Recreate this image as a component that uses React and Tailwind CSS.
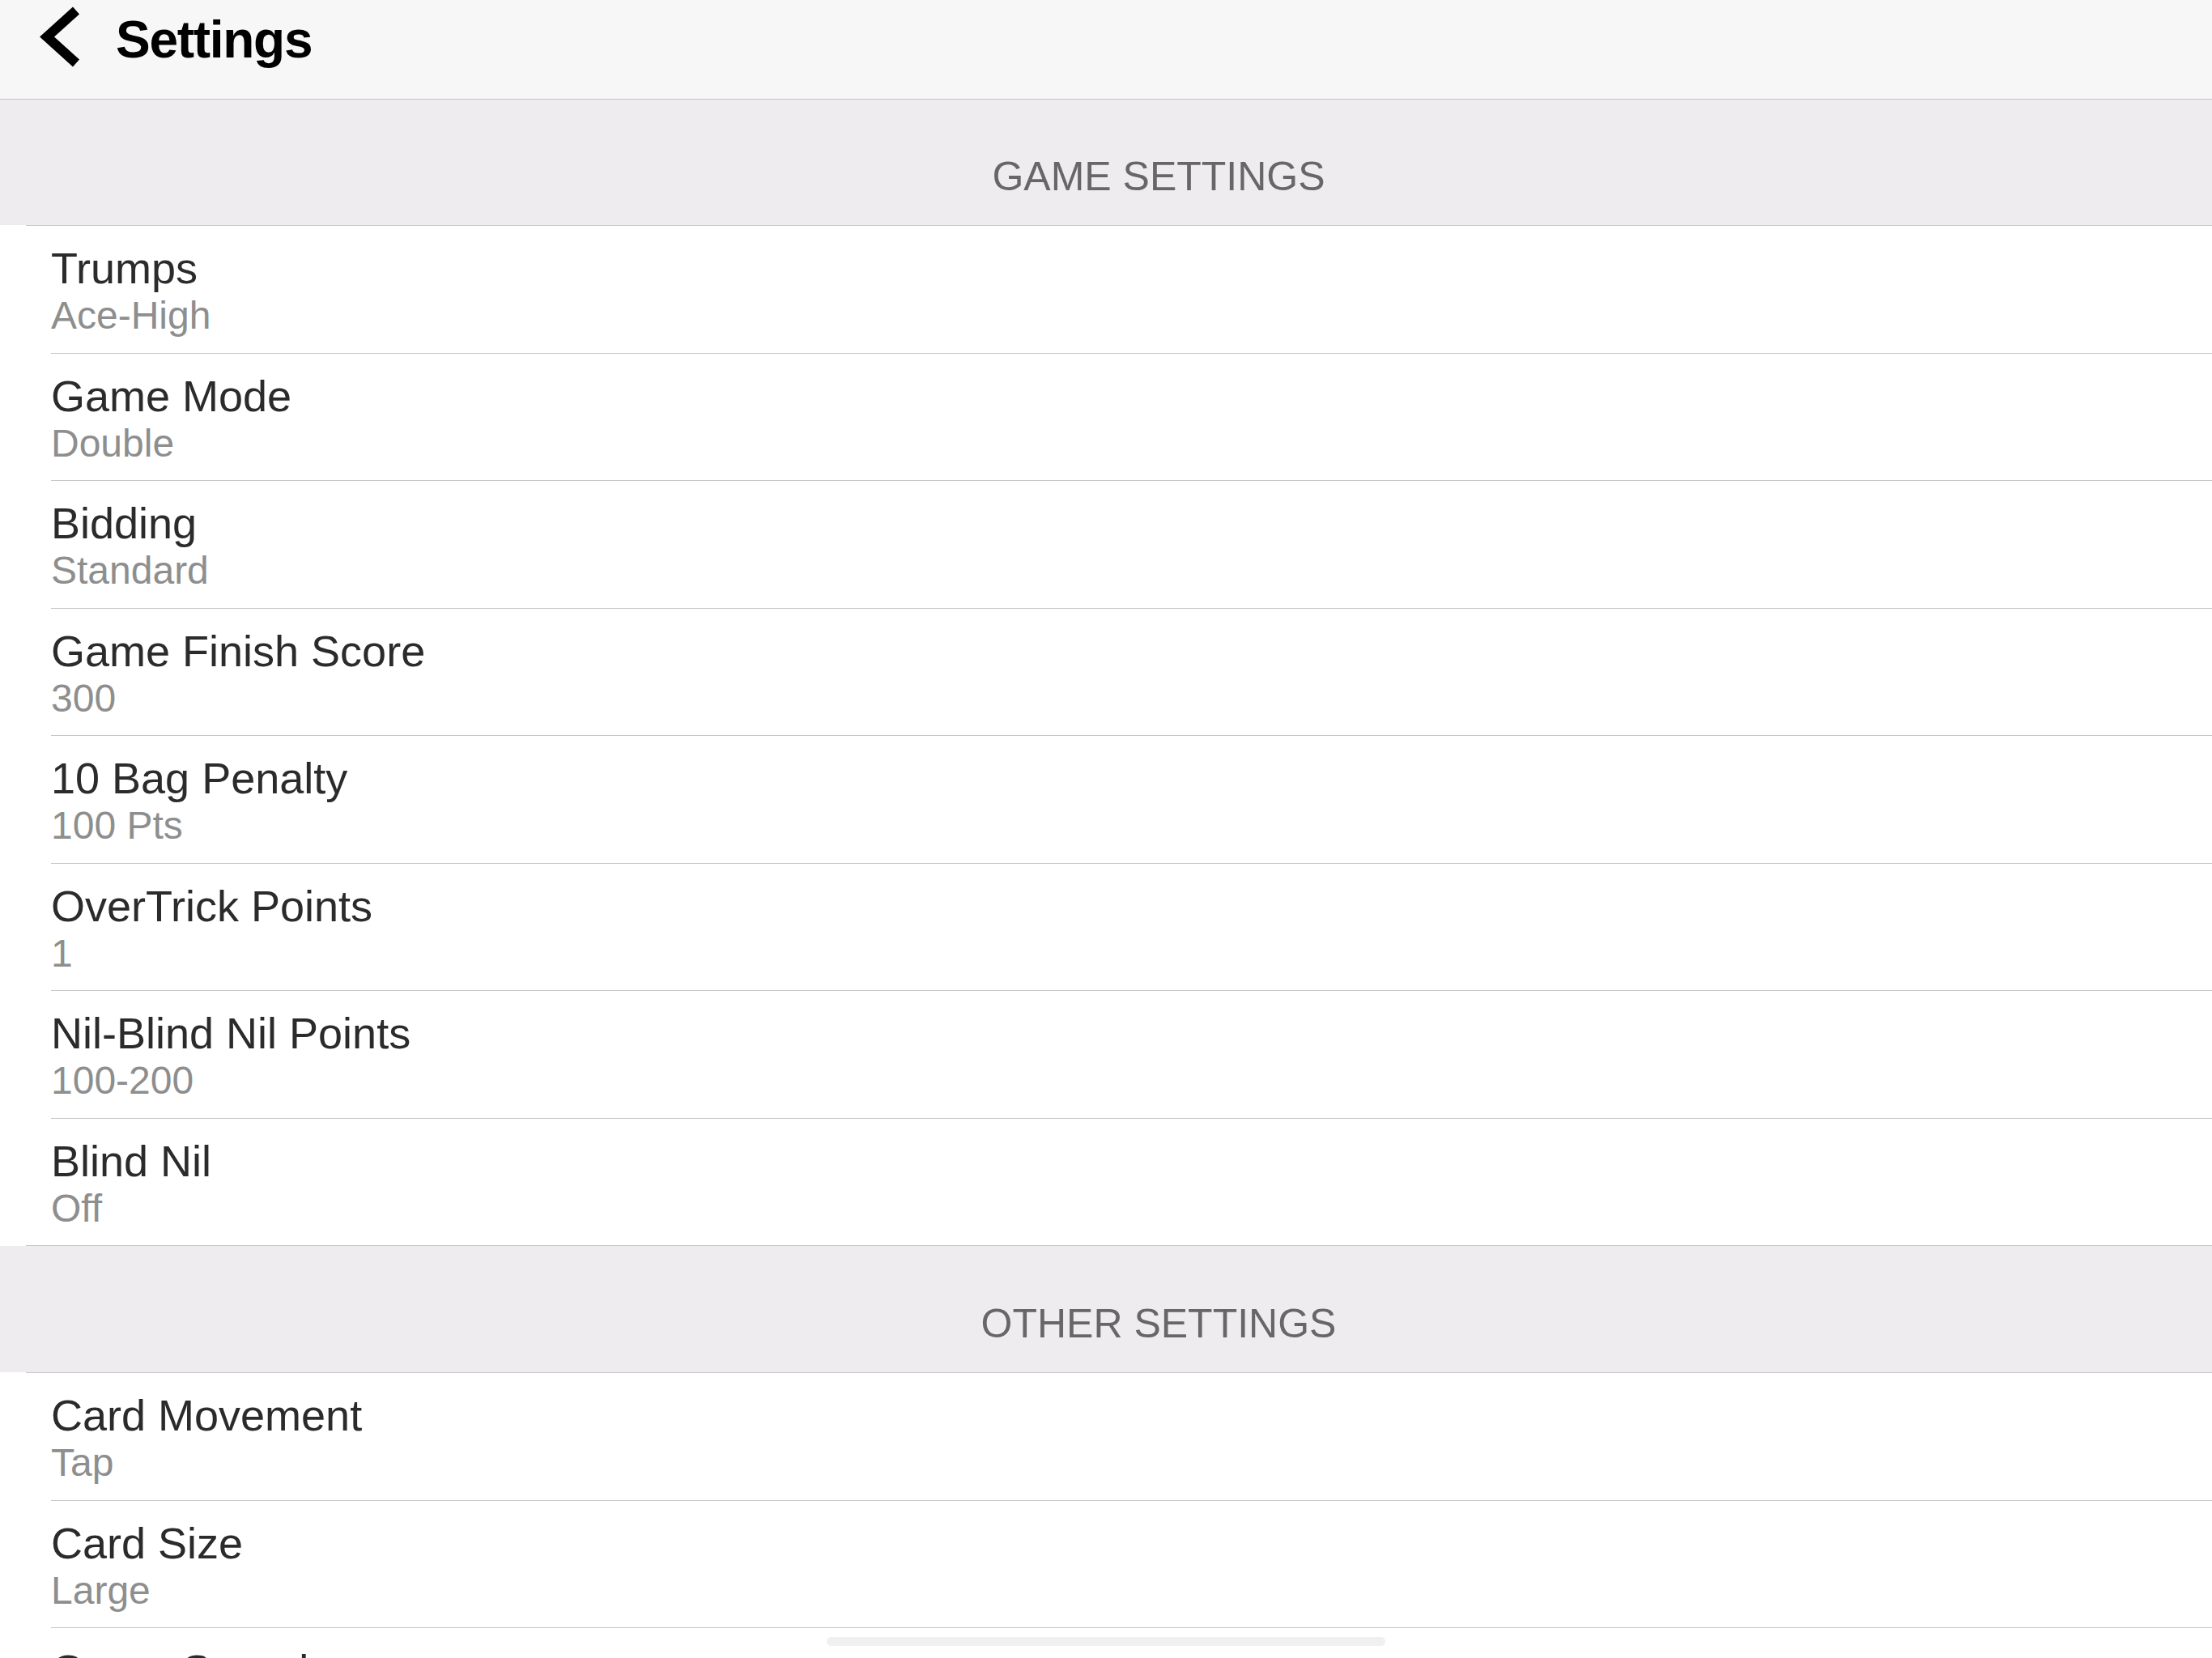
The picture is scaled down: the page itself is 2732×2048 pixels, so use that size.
import React from 'react';

const gameSettings = [
    { title: 'Trumps', value: 'Ace-High' },
    { title: 'Game Mode', value: 'Double' },
    { title: 'Bidding', value: 'Standard' },
    { title: 'Game Finish Score', value: '300' },
    { title: '10 Bag Penalty', value: '100 Pts' },
    { title: 'OverTrick Points', value: '1' },
    { title: 'Nil-Blind Nil Points', value: '100-200' },
    { title: 'Blind Nil', value: 'Off' },
];

const otherSettings = [
    { title: 'Card Movement', value: 'Tap' },
    { title: 'Card Size', value: 'Large' },
    { title: 'Game Sounds', value: 'On' },
];

const SectionHeader = ({ label }) => (
    <div>
        <div className="ml-[32px] h-px bg-[#c8c7cc]" />
        <div className="h-[156px] bg-[#efecf0] pl-[130px] pt-[71px] text-center">
            <span className="text-[50px] leading-[50px] text-[#676767]">{label}</span>
        </div>
        <div className="ml-[32px] h-px bg-[#c8c7cc]" />
    </div>
);

const Row = ({ title, value, last }) => (
    <div>
        <div className="h-[156.5px] pl-[63px] pt-[23px]">
            <div className="text-[54px] leading-[58px] text-[#2b2b2b]">{title}</div>
            <div className="mt-[4px] text-[48px] leading-[52px] text-[#8e8e8e]">{value}</div>
        </div>
        {!last && <div className="ml-[63px] h-px bg-[#c8c7cc]" />}
    </div>
);

const App = () => {
    return (
        <div className="relative h-screen w-full overflow-hidden bg-white font-['Liberation_Sans',Arial,sans-serif]">
            {/* nav bar */}
            <div className="flex h-[122px] items-start bg-[#f7f7f7]">
                <svg className="mt-[2px] ml-[44px] h-[86px] w-[64px]" viewBox="44 2 64 86">
                    <polyline
                        points="94,13 58,45.5 94,78"
                        fill="none"
                        stroke="#000"
                        strokeWidth="12"
                        strokeLinejoin="miter"
                    />
                </svg>
                <h1 className="ml-[35px] pt-[17px] text-[64px] leading-[64px] font-bold tracking-[-0.02em] text-black">
                    Settings
                </h1>
            </div>
            <div className="h-px bg-[#c4c3c8]" />

            <div className="bg-[#efecf0]">
                <div className="h-[155px] pl-[130px] pt-[70px] text-center">
                    <span className="text-[50px] leading-[50px] text-[#676767]">GAME SETTINGS</span>
                </div>
            </div>
            <div className="ml-[32px] h-px bg-[#c8c7cc]" />

            {gameSettings.map((s, i) => (
                <Row key={s.title} title={s.title} value={s.value} last={i === gameSettings.length - 1} />
            ))}

            <SectionHeader label="OTHER SETTINGS" />

            {otherSettings.map((s) => (
                <Row key={s.title} title={s.title} value={s.value} />
            ))}

            {/* home indicator */}
            <div className="absolute bottom-[15px] left-1/2 h-[11px] w-[690px] -translate-x-1/2 rounded-full bg-[#f0f0f0]" />
        </div>
    );
};

export default App;
